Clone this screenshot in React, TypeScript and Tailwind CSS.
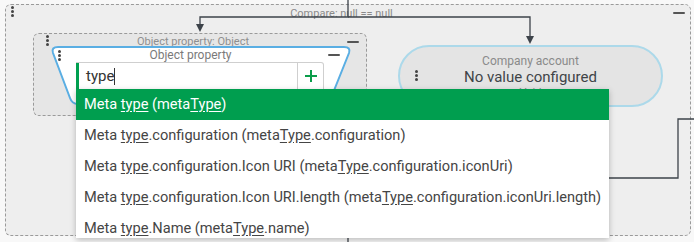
import React from "react";

const Dots = ({ className = "" }: { className?: string }) => (
  <div className={"flex flex-col gap-[1px] shrink-0 " + className}>
    <span className="block w-[3px] h-[3px] rounded-full bg-[#444]" />
    <span className="block w-[3px] h-[3px] rounded-full bg-[#444]" />
    <span className="block w-[3px] h-[3px] rounded-full bg-[#444]" />
  </div>
);

const Minus = ({ className = "" }: { className?: string }) => (
  <span className={"block w-[12px] h-[2px] shrink-0 rounded-full bg-[#555] " + className} />
);

const items: [string, string][] = [
  ["", ""],
  [".configuration", ".configuration"],
  [".configuration.Icon URI", ".configuration.iconUri"],
  [".configuration.Icon URI.length", ".configuration.iconUri.length"],
  [".Name", ".name"],
];

export default function App() {
  return (
    <div
      className="relative w-[694px] h-[242px] overflow-hidden bg-[#f8f8f8]"
      style={{ fontFamily: "Roboto, 'Noto Sans', sans-serif" }}
    >
      {/* Outer compare container */}
      <div className="absolute left-[5px] top-[4px] w-[686px] h-[232px] rounded-[6px] border border-dashed border-[#9a9a9a] bg-[#eeeeee]">
        <div className="flex items-start pl-[5px] pr-[5px] pt-[1px]">
          <Dots />
          <div className="flex-1 text-center pr-[4px] pt-[1px] text-[11px] leading-[14px] text-[#8a8a8a]">
            Compare: null == null
          </div>
          <Minus className="mt-[6px]" />
        </div>
      </div>

      {/* Connector lines */}
      <svg className="absolute left-0 top-0" width="694" height="242" viewBox="0 0 694 242">
        <g stroke="#3d434a" strokeWidth="1.3" fill="none">
          <path d="M348 0 V17 H200 V25" />
          <path d="M348 17 H530 V37" />
          <path d="M694 119 H678 V178 H590" />
          <path d="M348 236 V242" />
        </g>
        <polygon points="196,24 204,24 200,32" fill="#3d434a" />
        <polygon points="526,36 534,36 530,44" fill="#3d434a" />
      </svg>

      {/* Object property container */}
      <div className="absolute left-[33px] top-[33px] w-[334px] h-[83px] rounded-[6px] border border-dashed border-[#9a9a9a] bg-[#e6e6e6]">
        <div className="flex items-start pl-[12px] pr-[7px] pt-[1px]">
          <Dots />
          <div className="flex-1 text-center pr-[10px] text-[11px] leading-[14px] text-[#8f8f8f]">
            Object property: Object
          </div>
          <Minus className="mt-[6px]" />
        </div>
      </div>

      {/* Trapezoid node */}
      <div className="absolute left-[48px] top-[46px] w-[305px] h-[60px]">
        <svg className="absolute left-0 top-0" width="305" height="60" viewBox="0 0 305 60">
          <path
            d="M10 1 H296 Q303 1 301 7 L283 52 Q281 58 275 58 H30 Q24 58 22 52 L5 7 Q3 1 10 1 Z"
            fill="#ffffff"
            stroke="#5aaee3"
            strokeWidth="2"
          />
        </svg>
        <div className="relative flex flex-col">
          <div className="flex items-start pl-[10px] pr-[13px] pt-[2px] h-[16px]">
            <Dots className="mt-[2px]" />
            <div className="flex-1 text-center pr-[8px] text-[12px] leading-[15px] text-[#7a7a7a]">
              Object property
            </div>
            <Minus className="mt-[6px]" />
          </div>
          <div className="ml-[28px] w-[248px] h-[28px] flex bg-white border border-[#cfcfcf] border-l-0 rounded-tr-[3px]">
            <div className="w-[3px] bg-[#00a050]" />
            <div className="flex-1 flex items-center pl-[7px] text-[15px] text-[#333]">
              type<span className="inline-block w-[1px] h-[17px] bg-[#333]" />
            </div>
            <div className="w-[26px] border-l border-[#cfcfcf] flex items-center justify-center">
              <svg width="12" height="12" viewBox="0 0 12 12">
                <path d="M6 0 V12 M0 6 H12" stroke="#0a9d4a" strokeWidth="2" />
              </svg>
            </div>
          </div>
        </div>
      </div>

      {/* Company account node */}
      <div className="absolute left-[398px] top-[45px] w-[265px] h-[62px] rounded-full border-2 border-[#acd9ea] bg-[#e4e4e4] flex items-start pl-[15px]">
        <Dots className="mt-[23px]" />
        <div className="flex-1 flex flex-col items-center pt-[7px] pr-[18px]">
          <div className="text-[12px] leading-[14px] text-[#8a8a8a]">Company account</div>
          <div className="text-[15px] leading-[18px] text-[#3f4448]">No value configured</div>
          <div className="text-[11px] leading-[13px] text-[#8a8a8a]">Void</div>
        </div>
      </div>

      {/* Dropdown (overlay) */}
      <div className="absolute left-[76px] top-[89px] w-[533px] h-[149px] overflow-hidden bg-white shadow-[0_2px_6px_rgba(0,0,0,0.25)]">
        {items.map(([a, b], i) => (
          <div
            key={i}
            className={
              "h-[31px] flex items-center pl-[8px] text-[14.6px] whitespace-nowrap " +
              (i === 0 ? "bg-[#009e4f] text-white" : "text-[#454545]")
            }
          >
            Meta&nbsp;<u className="underline-offset-[2px]">type</u>
            {a}&nbsp;(meta<u className="underline-offset-[2px]">Type</u>
            {b})
          </div>
        ))}
      </div>
    </div>
  );
}
